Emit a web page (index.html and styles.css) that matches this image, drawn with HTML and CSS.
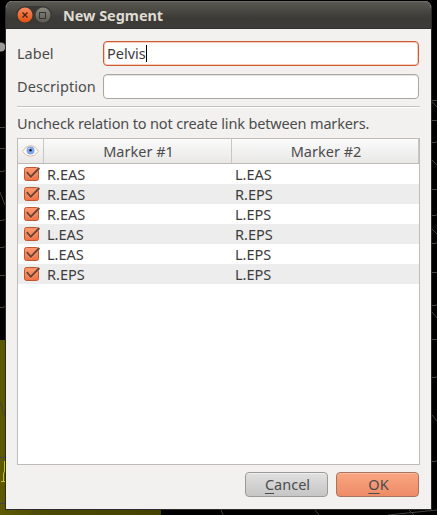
FILE: index.html
```html
<!DOCTYPE html>
<html lang="en">
<head>
<meta charset="utf-8">
<title>New Segment</title>
<link rel="stylesheet" href="styles.css">
</head>
<body>
<svg class="scene" width="437" height="515" viewBox="0 0 437 515" aria-hidden="true">
  <defs>
    <linearGradient id="floor" x1="0" y1="0" x2="1" y2="0"><stop offset="0" stop-color="#5e5a00"/><stop offset=".3" stop-color="#4b4800"/><stop offset="1" stop-color="#454200"/></linearGradient>
  </defs>
  <rect x="0" y="340" width="161" height="175" fill="url(#floor)"/>
  <circle cx="1" cy="47" r="4.500" fill="#9a9a9a"/>
  <g fill="none" stroke="#444" stroke-width="1">
    <path d="M0 127.500h5M0 148.500h5M0 171.500h3l2-1M0 192l5 13M0 220.500h2l3-1M0 247.500h3l2-1M0 275.500h5M0 307.500h3l2-1"/>
    <path d="M432 100.500h5M432 102l5 5M432 120.500h5M432 142.500h3l2-1M432 160l5 5M432 189.500h5M432 215.500h3l2-1M432 229l5 5M432 243.500h3l2-1M432 272.500h5M432 305.500h3l2-1M432 312l5 6M432 339.500h5M432 377.500h3l2-1M432 415l5 6M432 461.500h3l2-1"/>
    <path d="M221 510l2 5M315 510l4 5M388 515l49-5M409 510l5 5M34 510l2 5M0 457.500h5M0 503.500h5M0 402l5 14"/>
  </g>
  <path d="M4.500 461v10l-1 3v7M1 481.500h4" fill="none" stroke="#c8c800"/>
</svg>
<main class="window">
  <header class="titlebar">
    <svg class="controls" width="36" height="18" viewBox="0 0 36 18" aria-hidden="true">
      <defs>
        <linearGradient id="close" x1="0" y1="0" x2="0" y2="1"><stop offset="0" stop-color="#f58a5f"/><stop offset="1" stop-color="#e4500f"/></linearGradient>
        <linearGradient id="max" x1="0" y1="0" x2="0" y2="1"><stop offset="0" stop-color="#8a8980"/><stop offset="1" stop-color="#5c5b54"/></linearGradient>
      </defs>
      <rect width="36" height="18" rx="9" fill="#3a3935"/>
      <circle cx="9" cy="9" r="7.500" fill="url(#close)"/>
      <path d="M6.500 6.500l5 5M11.500 6.500l-5 5" stroke="#4d2413" stroke-width="1.400"/>
      <circle cx="27" cy="9" r="7.500" fill="url(#max)"/>
      <rect x="23.500" y="6.500" width="6" height="6" fill="none" stroke="#35342f"/>
    </svg>
    <h1 class="title">New Segment</h1>
  </header>
  <div class="content">
    <div class="form">
      <span class="label">Label</span>
      <div class="field focused"><span class="value">Pelvis</span><i class="caret"></i></div>
      <span class="label wide">Description</span>
      <div class="field"></div>
    </div>
    <hr class="rule">
    <p class="hint">Uncheck relation to not create link between markers.</p>
    <div class="table">
      <div class="row head">
        <div class="eye"><svg width="17" height="12" viewBox="0 0 17 12" aria-label="Visible">
          <path d="M.5 6.500Q3.500.7 8.500.7T16.300 6.500Q12.500 11.300 8.500 11.300T.5 6.500z" fill="#fff" stroke="#dcb99c"/>
          <circle cx="8.500" cy="5.500" r="4" fill="#7fa6e6"/><circle cx="8.500" cy="5.300" r="1.200" fill="#101828"/><circle cx="7" cy="3.500" r=".8" fill="#d7e6ff"/>
        </svg></div>
        <div class="th">Marker #1</div>
        <div class="th last">Marker #2</div>
      </div>
      <svg class="defs" width="0" height="0" aria-hidden="true">
        <defs><linearGradient id="box" x1="0" y1="0" x2="0" y2="1"><stop offset="0" stop-color="#ff9c72"/><stop offset="1" stop-color="#ee6f43"/></linearGradient></defs>
        <symbol id="check" viewBox="0 0 18 18">
          <rect x="1.500" y="2.500" width="14" height="13" rx="2" fill="url(#box)" stroke="#bd5634"/>
          <path d="M3.800 7.500l4 4.600L16 3.500" fill="none" stroke="#ffc0a3" stroke-width="3" opacity=".5"/>
          <path d="M3.800 7.200L7.800 11.800 16.300 3" fill="none" stroke="#6f4230" stroke-width="2"/>
        </symbol>
      </svg>
      <div class="row"><div class="cb"><svg width="18" height="18"><use href="#check"/></svg></div><div class="td">R.EAS</div><div class="td">L.EAS</div></div>
      <div class="row alt"><div class="cb"><svg width="18" height="18"><use href="#check"/></svg></div><div class="td">R.EAS</div><div class="td">R.EPS</div></div>
      <div class="row"><div class="cb"><svg width="18" height="18"><use href="#check"/></svg></div><div class="td">R.EAS</div><div class="td">L.EPS</div></div>
      <div class="row alt"><div class="cb"><svg width="18" height="18"><use href="#check"/></svg></div><div class="td">L.EAS</div><div class="td">R.EPS</div></div>
      <div class="row"><div class="cb"><svg width="18" height="18"><use href="#check"/></svg></div><div class="td">L.EAS</div><div class="td">L.EPS</div></div>
      <div class="row alt"><div class="cb"><svg width="18" height="18"><use href="#check"/></svg></div><div class="td">R.EPS</div><div class="td">L.EPS</div></div>
    </div>
    <div class="actions">
      <button class="btn cancel"><span class="key">C</span>ancel</button>
      <button class="btn ok"><span class="key">O</span>K</button>
    </div>
  </div>
</main>
</body>
</html>
```

FILE: styles.css
```css
* { box-sizing: border-box; }
body {
  margin: 0;
  height: 515px;
  overflow: hidden;
  background: #000;
  padding: 1px 5px 5px;
  font: 14.5px/20px "Noto Sans", "Open Sans", sans-serif;
  color: #4c4c4c;
}
.scene { position: absolute; left: 0; top: 0; }
.window {
  position: relative;
  width: 427px;
  height: 509px;
  border-radius: 7px 7px 0 0;
  background: #f2f1f0;
  border: 1px solid #2b2b2b;
  border-top: 0;
  overflow: hidden;
}
.titlebar {
  height: 28px;
  display: flex;
  align-items: center;
  padding: 0 0 1px 10px;
  gap: 11px;
  background: linear-gradient(#595852, #3c3b37 60%);
  border-top: 1px solid #6b6a63;
  border-bottom: 1px solid #33322e;
}
.controls { display: block; }
.title { margin: 0; font-size: 14.5px; line-height: 20px; font-weight: 700; color: #dfdbd2; letter-spacing: -0.05px; }
.content { padding: 12px 11px 0; }
.form {
  display: grid;
  grid-template-columns: 78px 316px;
  grid-auto-rows: 25px;
  gap: 8px;
  align-items: center;
}
.label { white-space: nowrap; padding-bottom: 2px; }
.wide { letter-spacing: 0.08px; }
.field {
  height: 25px;
  border: 1px solid #aaa7a3;
  border-radius: 4px;
  background: #fff;
  display: flex;
  align-items: center;
  padding-left: 3px;
  color: #3c3c3c;
  box-shadow: inset 0 1px 1px #e2e1df;
}
.value { padding-bottom: 2px; }
.focused { border-color: #ce5a32; box-shadow: inset 0 0 0 1px #f8cdbb; }
.caret { width: 1px; height: 17px; background: #000; }
.rule { margin: 7px 0 0; width: 403px; height: 2px; border: 0; border-top: 1px solid #c4c2bf; background: #fff; }
.hint { margin: 5px 0 0; height: 25px; line-height: 20px; white-space: nowrap; letter-spacing: -0.155px; }
.table { width: 403px; height: 327px; border: 1px solid #bfbcb8; background: #fff; }
.row { display: grid; grid-template-columns: 26px 188px 187px; height: 20px; color: #3c3c3c; }
.alt { background: #ededed; }
.head {
  height: 25px;
  background: linear-gradient(#fbfbfb, #e9e8e7);
  border-bottom: 1px solid #bfbcb8;
  color: #4c4c4c;
}
.head > div { border-right: 1px solid #c9c6c3; display: flex; align-items: center; justify-content: center; }
.head > .th { padding-left: 2px; }
.head > .eye { padding-right: 1px; }
.defs { position: absolute; }
.cb { padding: 1px 0 0 5px; height: 20px; }
.cb svg { display: block; }
.td { padding-left: 3px; }
.actions { display: flex; justify-content: flex-end; gap: 8px; margin: 7px 1px 0 0; }
.btn {
  width: 83px;
  height: 25px;
  border: 1px solid #9b9a98;
  border-radius: 4px;
  padding: 0 0 0 2px;
  font: inherit;
  line-height: 21px;
  color: #4c4c4c;
  background: linear-gradient(#e0e0e0, #c6c6c6);
  box-shadow: inset 0 1px 0 #efefef;
}
.ok { border-color: #a9745f; background: linear-gradient(#f9a582, #ee8c66); box-shadow: inset 0 1px 0 #fcbb9f; }
.key { text-decoration: underline; text-decoration-thickness: 1px; text-underline-offset: 3px; text-decoration-skip-ink: none; }
```
